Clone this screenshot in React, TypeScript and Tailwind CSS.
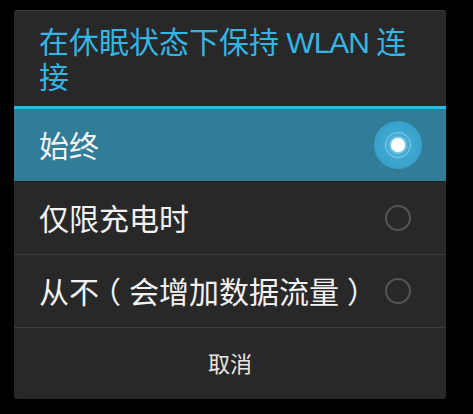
const font = { fontFamily: '"Open Sans", "Noto Sans CJK SC", sans-serif' };
const latin = { fontFamily: '"Liberation Sans", Arial, sans-serif' };

const options = ["始终", "仅限充电时", "从不（会增加数据流量）"];

// the reference draws full-width parentheses centred in their cell
function Label({ text }: { text: string }) {
  const parts = text.split(/([（）])/);
  return (
    <span className="text-[30px] text-[#f2f2f2]">
      {parts.map((p, i) =>
        p === "（" ? (
          <span key={i} className="inline-block -translate-x-[8px]">
            {p}
          </span>
        ) : p === "）" ? (
          <span key={i} className="inline-block translate-x-[8px]">
            {p}
          </span>
        ) : (
          p
        )
      )}
    </span>
  );
}

function Radio({ checked }: { checked: boolean }) {
  if (checked) {
    return (
      <div className="w-[48px] h-[48px] rounded-full bg-[radial-gradient(circle,#47b3dc_0%,#3aa3cd_60%,#3597c0_100%)] flex items-center justify-center">
        <div className="w-[26px] h-[26px] rounded-full border border-[#8ccfe8] flex items-center justify-center">
          <div className="w-[14px] h-[14px] rounded-full bg-white shadow-[0_0_3px_1px_rgba(255,255,255,0.6)]" />
        </div>
      </div>
    );
  }
  return (
    <div className="w-[48px] h-[48px] flex items-center justify-center">
      <div className="w-[26px] h-[26px] rounded-full border-2 border-[#555555]" />
    </div>
  );
}

export default function App() {
  const selected = 0;
  return (
    <div className="w-[473px] h-[414px] bg-black pt-[10px] pl-[14px]" style={font}>
      <div className="w-[432px] bg-[#282828] rounded-[3px] border-t border-[#3a3a3a] overflow-hidden">
        <div className="px-[25px] pt-[13px] pb-[12px] text-[30px] leading-[35px] text-[#33b5e5]">
          在休眠状态下保持
          <span className="leading-none tracking-[-1px]" style={latin}>
            {" WLAN "}
          </span>
          连<br />接
        </div>
        <div className="h-[3px] bg-[#33b5e5]" />
        {options.map((label, i) => (
          <div
            key={label}
            className={`h-[73px] flex items-center justify-between pl-[25px] pr-[24px] border-b border-[#3c3c3c] ${
              i === selected ? "bg-[#317c97] border-[#222222]" : ""
            }`}
          >
            <Label text={label} />
            <Radio checked={i === selected} />
          </div>
        ))}
        <div className="h-[71px] flex items-center justify-center text-[22px] text-[#e6e6e6]">取消</div>
      </div>
    </div>
  );
}
